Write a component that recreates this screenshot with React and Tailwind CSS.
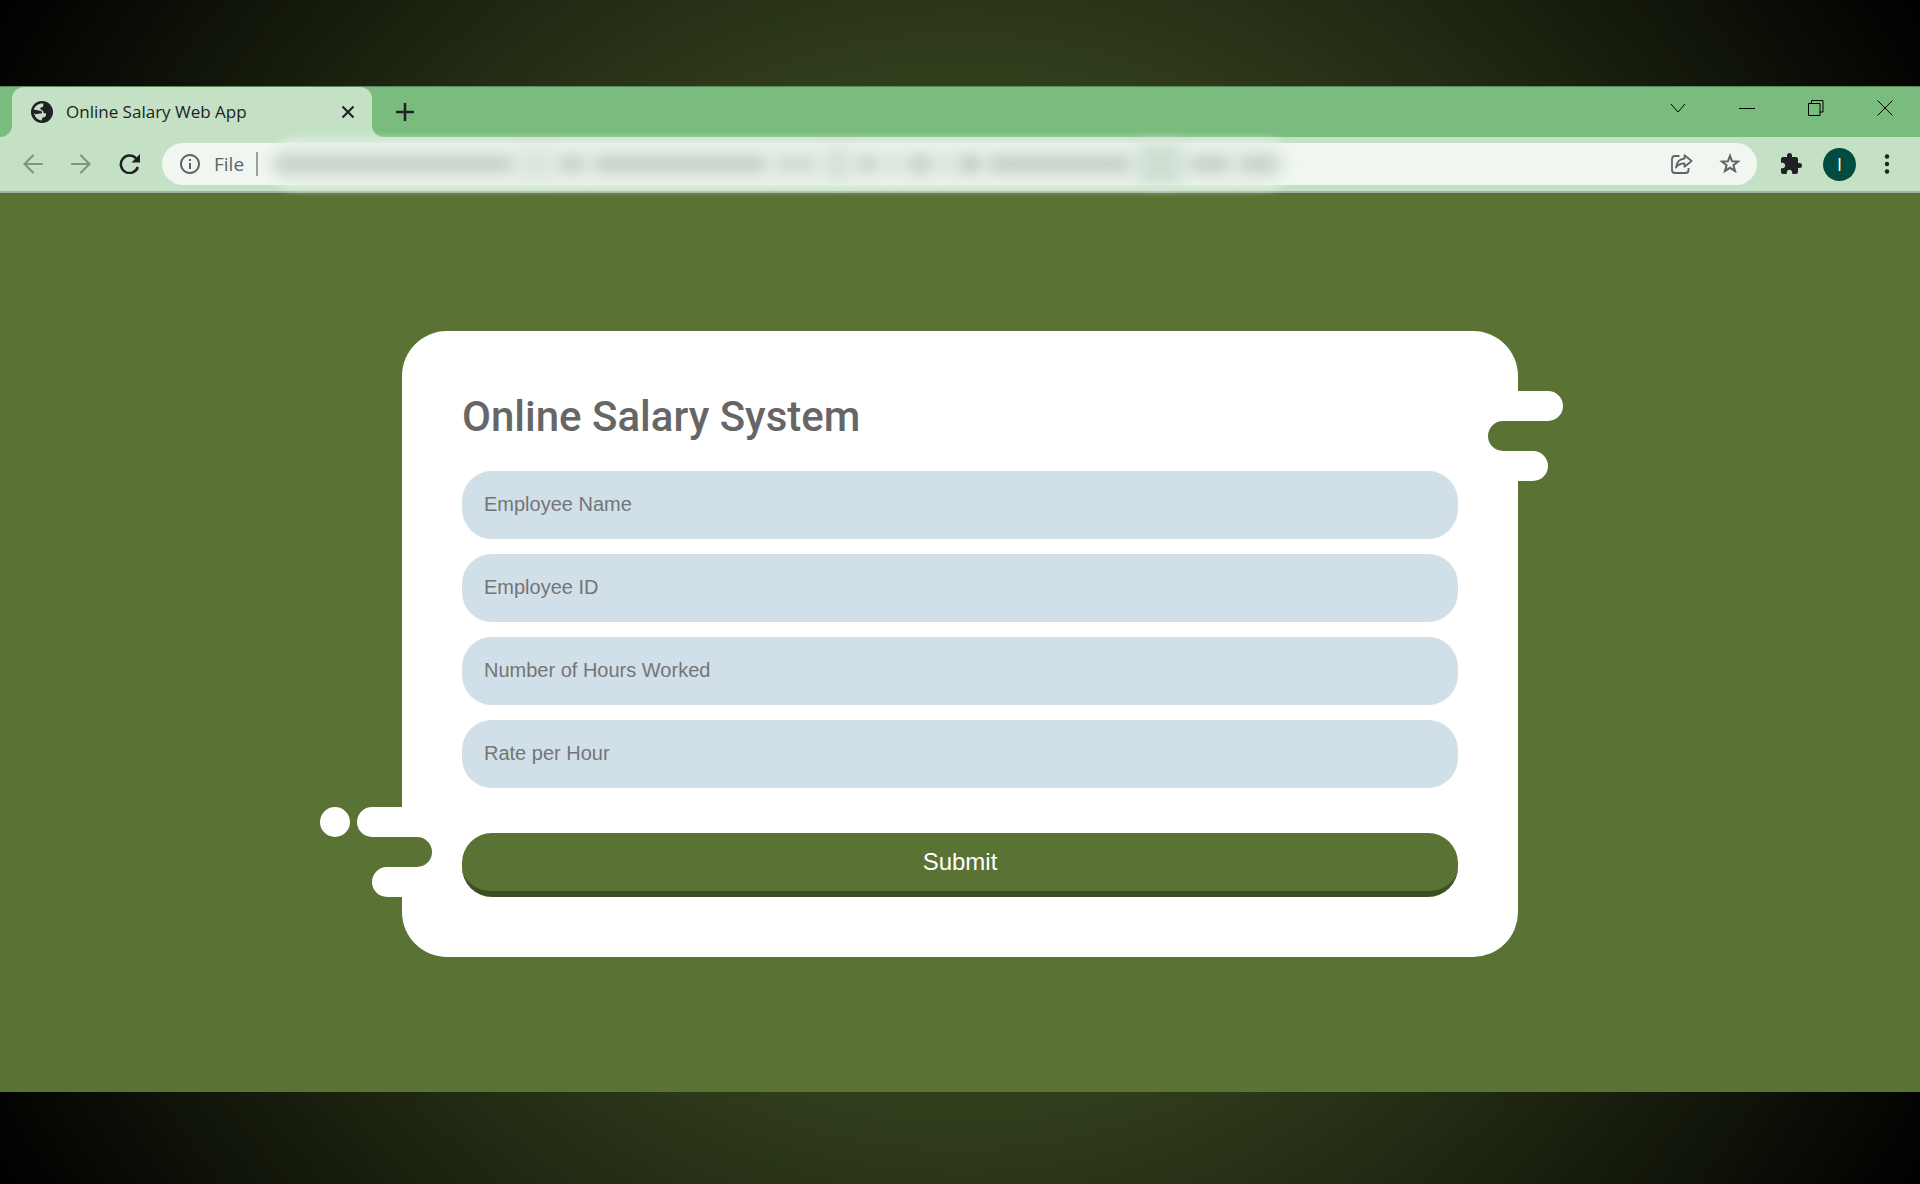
import React from "react";
import { MdInfoOutline, MdExtension } from "react-icons/md";

const FIELDS = [
  { id: "employee-name", label: "Employee Name" },
  { id: "employee-id", label: "Employee ID" },
  { id: "hours-worked", label: "Number of Hours Worked" },
  { id: "hourly-rate", label: "Rate per Hour" },
];

function GlobeIcon() {
  return (
    <svg viewBox="0 0 22 22" className="size-[22px] shrink-0" aria-hidden="true">
      <circle cx="11" cy="11" r="11" fill="#202124" />
      <path
        d="M12.500 2.500C8 2 4 4.500 2.800 8.500L7.500 9.500C10 9.500 11.500 10.500 11 12.300L4.500 13.200 3 12C3.500 16 7 19.400 10.500 19.400L11.500 16.500C14 16.500 15.500 15 15 12.500L12.500 12C12.500 10 11.500 9 9.500 8.500V6.500L12 6Z"
        fill="#c5e1c5"
      />
    </svg>
  );
}

function TabStrip() {
  return (
    <div className="flex h-[51px] items-stretch border-t border-[#5a8a5c] bg-[#7abc7d] text-[#202124]">
      <div className="w-3 shrink-0 bg-[#c5e1c5]">
        <div className="h-full rounded-br-xl bg-[#7abc7d]" />
      </div>
      <div className="flex w-[360px] shrink-0 items-center rounded-t-xl bg-[#c5e1c5] pr-[15px] pl-[19px]">
        <GlobeIcon />
        <span className="ml-[13px] grow font-['Open_Sans','Noto_Sans',sans-serif] text-[17px] leading-6">
          Online Salary Web App
        </span>
        <button type="button" aria-label="Close tab">
          <svg viewBox="0 0 18 18" className="size-[18px]" fill="none" stroke="currentColor" strokeWidth="2.200">
            <path d="M3.500 3.500 14.500 14.500M14.500 3.500 3.500 14.500" />
          </svg>
        </button>
      </div>
      <div className="flex grow bg-[#c5e1c5]">
        <div className="flex grow items-center rounded-bl-xl bg-[#7abc7d] pl-[23px]">
          <button type="button" aria-label="New tab">
            <svg viewBox="0 0 20 20" className="size-5" fill="none" stroke="currentColor" strokeWidth="2.600">
              <path d="M10 1V19M1 10H19" />
            </svg>
          </button>
          <div className="mr-[27px] mb-2 ml-auto flex items-center gap-[53px] text-black">
            <button type="button" aria-label="Search tabs">
              <svg viewBox="0 0 16 16" className="size-4" fill="none" stroke="currentColor" strokeWidth="1">
                <path d="M1 4 8 12 15 4" />
              </svg>
            </button>
            <button type="button" aria-label="Minimize">
              <svg viewBox="0 0 16 16" className="size-4" fill="none" stroke="currentColor">
                <path d="M0 8.500H16" />
              </svg>
            </button>
            <button type="button" aria-label="Restore">
              <svg viewBox="0 0 16 16" className="size-4" fill="none" stroke="currentColor">
                <path d="M.5 3.500H12V15.500H.5ZM3.500 3.500V.5H15V12H12" />
              </svg>
            </button>
            <button type="button" aria-label="Close window">
              <svg viewBox="0 0 16 16" className="size-4" fill="none" stroke="currentColor" strokeWidth="1">
                <path d="M.5 .5 15.500 15.500M15.500 .5 .5 15.500" />
              </svg>
            </button>
          </div>
        </div>
      </div>
    </div>
  );
}

const SMUDGES = [
  "h-4 w-60 bg-[#c6cdc8]",
  "h-8 w-8 bg-[#dae5dc]",
  "h-4 w-7 bg-[#c6cdc8]",
  "h-4 w-44 bg-[#c6cdc8]",
  "h-4 w-11 bg-[#d0d7d2]",
  "h-8 w-7 bg-[#d6e2d8]",
  "h-4 w-5 bg-[#c6cdc8]",
  "h-4 w-4 bg-[#d6dcd8]",
  "h-4 w-7 bg-[#c6cdc8]",
  "h-4 w-3 bg-[#d6dcd8]",
  "h-4 w-6 bg-[#bfc6c2]",
  "h-4 w-36 bg-[#c4cbc6]",
  "h-10 w-11 bg-[#cfdfd2]",
  "h-4 w-11 bg-[#c6cdc8]",
  "h-4 w-10 bg-[#c6cdc8]",
];

function Toolbar() {
  return (
    <div className="flex h-14 items-center border-b-2 border-[#9fb3a0] bg-[#c5e1c5] pr-[22px] pl-[23px] text-[#202124]">
      <div className="flex items-center gap-7">
        <button type="button" aria-label="Back" className="text-[#7f9680]">
          <svg viewBox="0 0 20 20" className="size-5" fill="none" stroke="currentColor" strokeWidth="2.200" strokeLinecap="round">
            <path d="M19 10H2M10 1.500 1.500 10 10 18.500" />
          </svg>
        </button>
        <button type="button" aria-label="Forward" className="text-[#7f9680]">
          <svg viewBox="0 0 20 20" className="size-5" fill="none" stroke="currentColor" strokeWidth="2.200" strokeLinecap="round">
            <path d="M1 10H18M10 1.500 18.500 10 10 18.500" />
          </svg>
        </button>
        <button type="button" aria-label="Reload">
          <svg viewBox="0 0 22 20" className="h-5 w-[22px]" fill="none" stroke="currentColor" strokeWidth="2.500">
            <path d="M18.800 13A8.700 8.700 0 1 1 17 4.500" />
            <path d="M21 0V8.500H12.500Z" fill="currentColor" stroke="none" />
          </svg>
        </button>
      </div>
      <div className="ml-[21px] flex h-[42px] min-w-0 grow items-center rounded-full bg-[#f0f7f1] pr-4 pl-4 text-[#5f6368]">
        <MdInfoOutline className="size-6 shrink-0" />
        <span className="ml-3 font-['Open_Sans','Noto_Sans',sans-serif] text-[19px] leading-6">File</span>
        <span className="ml-3 h-6 w-0.5 shrink-0 bg-[#9aa39b]" />
        <div className="relative flex h-12 min-w-0 grow items-center">
          <div className="absolute inset-y-0 left-3 w-[1020px] rounded-full bg-[#e7f1e8] blur-[5px]" />
          <div className="relative flex items-center gap-1.5 pl-4 blur-[7px]">
            {SMUDGES.map((style, i) => (
              <span key={i} className={"shrink-0 rounded-lg " + style} />
            ))}
          </div>
        </div>
        <button type="button" aria-label="Share" className="shrink-0">
          <svg viewBox="0 0 22 20" className="h-5 w-[22px]" fill="none" stroke="currentColor" strokeWidth="1.800" strokeLinejoin="round">
            <path d="M8.500 2H4Q1 2 1 5V16Q1 19 4 19H14.500Q17.500 19 17.500 16V14" />
            <path d="M13.500 1.200 20.600 7 13.500 12.800V9.400C9.500 9.300 7.200 10.600 5 13.500 5.500 8.500 8.500 5 13.500 4.600Z" />
          </svg>
        </button>
        <button type="button" aria-label="Bookmark this page" className="ml-[26px] shrink-0">
          <svg viewBox="0 0 22 22" className="size-[22px]" fill="none" stroke="currentColor" strokeWidth="2">
            <path d="M11 2.800 13.100 8.300 19 8.600 14.400 12.300 16 18 11 14.800 6 18 7.600 12.300 3 8.600 8.900 8.300Z" />
          </svg>
        </button>
      </div>
      <button type="button" aria-label="Extensions" className="ml-[22px] shrink-0">
        <MdExtension className="size-6" />
      </button>
      <button
        type="button"
        aria-label="Profile"
        className="ml-5 size-[33px] shrink-0 rounded-full bg-[#004d40] font-['Open_Sans','Noto_Sans',sans-serif] text-lg leading-[33px] text-white"
      >
        I
      </button>
      <button type="button" aria-label="Menu" className="ml-5 shrink-0">
        <svg viewBox="0 0 22 22" className="size-[22px]" fill="currentColor">
          <circle cx="11" cy="3.500" r="2.200" />
          <circle cx="11" cy="11" r="2.200" />
          <circle cx="11" cy="18.500" r="2.200" />
        </svg>
      </button>
    </div>
  );
}

function SalaryForm() {
  return (
    <form
      onSubmit={(e) => e.preventDefault()}
      className="relative w-full max-w-[1116px] rounded-[45px] bg-white p-[60px]"
    >
      <div aria-hidden="true" className="absolute top-[60px] -right-[45px] w-[75px]">
        <div className="h-[30px] rounded-r-full bg-white" />
        <div className="mr-[30px] h-[30px] rounded-l-full bg-[#5a7233]" />
        <div className="mr-[15px] ml-[30px] h-[30px] rounded-r-full bg-white" />
      </div>
      <div aria-hidden="true" className="absolute bottom-[60px] -left-[82px] w-28">
        <div className="flex gap-[7px]">
          <div className="size-[30px] rounded-full bg-white" />
          <div className="h-[30px] grow rounded-l-full bg-white" />
        </div>
        <div className="ml-[67px] h-[30px] rounded-r-full bg-[#5a7233]" />
        <div className="mr-[30px] ml-[52px] h-[30px] rounded-l-full bg-white" />
      </div>

      <h1 className="font-[Roboto,sans-serif] text-[42px] leading-[52px] font-medium text-[#666666]">
        Online Salary System
      </h1>
      <div className="mt-7 flex flex-col gap-[15px]">
        {FIELDS.map(({ id, label }) => (
          <input
            key={id}
            id={id}
            type="text"
            aria-label={label}
            placeholder={label}
            className="h-[68px] w-full rounded-[30px] bg-[#d0dfe8] px-[22px] pb-0.5 font-['Liberation_Sans',Arial,sans-serif] text-xl text-[#333333] placeholder:text-[#757575]"
          />
        ))}
      </div>
      <button
        type="submit"
        className="mt-[45px] h-16 w-full rounded-[30px] border-b-6 border-[#3d4e22] bg-[#5a7233] font-['Liberation_Sans',Arial,sans-serif] text-2xl text-white"
      >
        Submit
      </button>
    </form>
  );
}

export default function App() {
  return (
    <div className="flex min-h-screen flex-col bg-[radial-gradient(circle,#5a7233,#000000)] pt-[86px] pb-[92px]">
      <header>
        <TabStrip />
        <Toolbar />
      </header>
      <main className="flex grow flex-col items-center bg-[#5a7233] px-24 pt-[138px] pb-16">
        <SalaryForm />
      </main>
    </div>
  );
}
